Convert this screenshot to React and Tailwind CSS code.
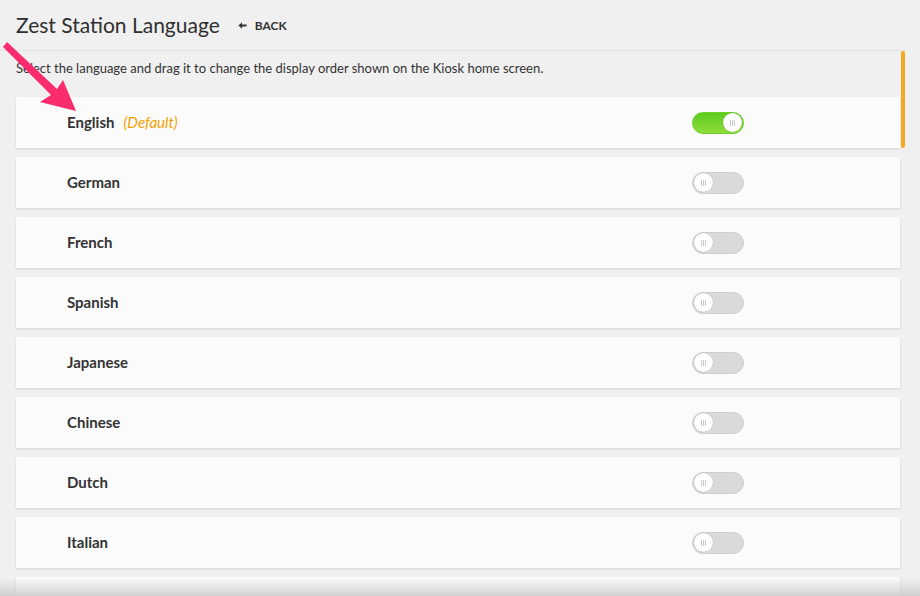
import { useState } from 'react'

function Toggle({ on, onClick }) {
  return (
    <button
      type="button"
      onClick={onClick}
      className={
        on
          ? 'relative w-[52px] h-[22px] rounded-full bg-gradient-to-b from-[#5ccb1b] to-[#8fdc3c] border border-[#6ccf2a] flex items-center justify-end px-[1px]'
          : 'relative w-[52px] h-[22px] rounded-full bg-[#dadada] border border-[#cfcfcf] flex items-center justify-start px-[1px]'
      }
    >
      <span className="w-[19px] h-[19px] rounded-full bg-white shadow-[0_0_1px_rgba(0,0,0,0.3)] flex items-center justify-center gap-[1px]">
        <span className="w-px h-[6px] bg-[#c8c8c8]" />
        <span className="w-px h-[6px] bg-[#c8c8c8]" />
        <span className="w-px h-[6px] bg-[#c8c8c8]" />
      </span>
    </button>
  )
}

export default function App() {
  const [langs, setLangs] = useState([
    { name: 'English', on: true, def: true },
    { name: 'German', on: false },
    { name: 'French', on: false },
    { name: 'Spanish', on: false },
    { name: 'Japanese', on: false },
    { name: 'Chinese', on: false },
    { name: 'Dutch', on: false },
    { name: 'Italian', on: false },
  ])

  function toggle(i) {
    setLangs(langs.map((l, j) => (j === i ? { ...l, on: !l.on } : l)))
  }

  return (
    <div
      className="relative w-[920px] h-[596px] overflow-hidden bg-[#f0f0f0] text-[#333]"
      style={{ fontFamily: '"Source Sans Pro", Lato, "Open Sans", sans-serif' }}
    >
      {/* Header */}
      <header className="h-[50px] flex items-center px-4">
        <h1 className="text-[21px] text-[#2f2f2f]">Zest Station Language</h1>
        <button type="button" className="ml-[18px] flex items-center gap-[8px] text-[12px] font-bold text-[#333] mt-[1px]">
          <svg className="w-[9px] h-[9px]" viewBox="0 0 10 10">
            <path d="M0.5 5 L4.5 1.5 L4.5 4 L9.5 4 L9.5 6 L4.5 6 L4.5 8.5 Z" fill="#333" />
          </svg>
          BACK
        </button>
      </header>

      {/* Panel */}
      <div className="relative w-[905px] border-t border-[#e2e2e2]">
        <p className="pl-4 pt-[8px] h-[46px] text-[13px] text-[#333]">
          Select the language and drag it to change the display order shown on the Kiosk home screen.
        </p>
        <div className="pl-4 pr-[5px] flex flex-col gap-[9px]">
          {langs.map((l, i) => (
            <div
              key={l.name}
              className="h-[51px] bg-[#fbfbfb] shadow-[0_1px_2px_rgba(0,0,0,0.12)] flex items-center justify-between pl-[51px] pr-[156px]"
            >
              <div className="flex items-center gap-[9px] text-[15px] -mt-[1px]">
                <span className="font-bold text-[#333]">{l.name}</span>
                {l.def && <span className="italic text-[#f5a000]">(Default)</span>}
              </div>
              <Toggle on={l.on} onClick={() => toggle(i)} />
            </div>
          ))}
          <div className="h-[51px] bg-[#fbfbfb] shadow-[0_1px_2px_rgba(0,0,0,0.12)]" />
        </div>
        {/* scrollbar */}
        <div className="absolute right-0 top-0 w-[4px] h-[97px] rounded-full bg-[#f6a91f]" />
      </div>

      {/* bottom fade */}
      <div className="absolute left-0 right-0 bottom-0 h-[18px] bg-gradient-to-b from-transparent to-[#d0d0d0]" />

      {/* annotation arrow */}
      <svg className="absolute left-0 top-[38px] w-[90px] h-[80px]" viewBox="0 0 90 80">
        <path d="M3 9 L7 4 L57 51 L63 42 L76 73 L40 64 L51 57 Z" fill="#fb2c6e" />
      </svg>
    </div>
  )
}
